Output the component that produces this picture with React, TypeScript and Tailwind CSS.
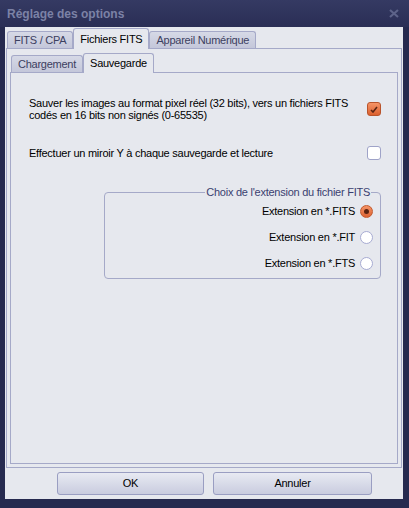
import React from 'react';

const font = { fontFamily: '"Liberation Sans", Arial, sans-serif' };

function CheckBox({ checked }: { checked?: boolean }) {
  if (checked) {
    return (
      <div className="w-[14px] h-[14px] shrink-0 rounded-[3px] border border-[#b9532b] bg-gradient-to-b from-[#f59466] to-[#db5f2d] flex items-center justify-center">
        <svg width="8" height="7" viewBox="0 0 8 7">
          <path d="M1 4 L3 6 L7 1" stroke="#5b2412" strokeWidth="1.6" fill="none" />
        </svg>
      </div>
    );
  }
  return <div className="w-[14px] h-[14px] shrink-0 rounded-[3px] border border-[#9fa3c8] bg-white" />;
}

function Radio({ checked }: { checked?: boolean }) {
  if (checked) {
    return (
      <div className="w-[13px] h-[13px] shrink-0 rounded-full border border-[#c25a2e] bg-gradient-to-b from-[#f59466] to-[#dc6232] flex items-center justify-center">
        <div className="w-[5px] h-[5px] rounded-full bg-[#5a2210]" />
      </div>
    );
  }
  return <div className="w-[13px] h-[13px] shrink-0 rounded-full border border-[#a7abd2] bg-white" />;
}

function OuterTab({ label, active }: { label: string; active?: boolean }) {
  return active ? (
    <div className="h-[21px] -mb-px z-10 px-[6px] flex items-center border border-b-0 border-[#a5a9c8] rounded-t-[3px] bg-[#e6e8ee] text-black">
      {label}
    </div>
  ) : (
    <div className="h-[17px] px-[6px] flex items-center border border-b-0 border-[#a5a9c8] rounded-t-[3px] bg-gradient-to-b from-[#d6d9e6] to-[#c4c7da] text-[#3c4060]">
      {label}
    </div>
  );
}

function RadioRow({ label, checked }: { label: string; checked?: boolean }) {
  return (
    <div className="flex items-center justify-end gap-[5px] h-[13px]">
      <span>{label}</span>
      <Radio checked={checked} />
    </div>
  );
}

export default function App() {
  return (
    <div className="w-[409px] h-[508px] bg-[#262a4f] flex flex-col text-[11px] tracking-[-0.25px] text-black" style={font}>
      {/* Title bar */}
      <div className="h-[27px] shrink-0 flex items-center justify-between pl-[7px] pr-[10px] bg-gradient-to-b from-[#353a63] to-[#2a2e55]">
        <span className="text-[12px] font-bold tracking-normal text-[#7c82a6]">Réglage des options</span>
        <svg width="10" height="9" viewBox="0 0 10 9">
          <path d="M1 1 L9 8 M9 1 L1 8" stroke="#5d6389" strokeWidth="2.2" />
        </svg>
      </div>

      {/* Client */}
      <div className="flex-1 ml-[5px] mr-[6px] mb-[9px] bg-[#e6e8ee] flex flex-col">
        {/* Outer tabs */}
        <div className="h-[21px] flex items-end pl-[2px]">
          <OuterTab label="FITS / CPA" />
          <OuterTab label="Fichiers FITS" active />
          <OuterTab label="Appareil Numérique" />
        </div>

        {/* Outer panel */}
        <div className="ml-[1px] mr-[1px] h-[420px] border border-[#a5a9c8] flex flex-col px-[3px]">
          {/* Inner tabs */}
          <div className="h-[23px] flex items-end pl-[1px]">
            <div className="h-[17px] px-[6px] flex items-center border border-b-0 border-[#a5a9c8] rounded-t-[3px] bg-gradient-to-b from-[#d6d9e6] to-[#c4c7da] text-[#3c4060]">
              Chargement
            </div>
            <div className="h-[20px] -mb-px z-10 px-[6px] flex items-center border border-b-0 border-[#a5a9c8] rounded-t-[3px] bg-[#e6e8ee]">
              Sauvegarde
            </div>
          </div>

          {/* Inner panel */}
          <div className="h-[392px] border border-[#a5a9c8] pl-[18px] pr-[16px] pt-[24px]">
            <div className="flex items-center justify-between">
              <p className="leading-[12px]">
                Sauver les images au format pixel réel (32 bits), vers un fichiers FITS
                <br />
                codés en 16 bits non signés (0-65535)
              </p>
              <CheckBox checked />
            </div>

            <div className="flex items-center justify-between mt-[25px]">
              <p className="leading-[12px]">Effectuer un miroir Y à chaque sauvegarde et lecture</p>
              <CheckBox />
            </div>

            <div className="ml-[75px] mt-[32px] h-[87px] relative border border-[#a5a9c8] rounded-[4px] pr-[7px] pt-[12px] flex flex-col gap-[13px]">
              <span className="absolute -top-[7px] right-[9px] px-[1px] bg-[#e6e8ee] text-[#3a3f70] leading-[12px]">
                Choix de l'extension du fichier FITS
              </span>
              <RadioRow label="Extension en *.FITS" checked />
              <RadioRow label="Extension en *.FIT" />
              <RadioRow label="Extension en *.FTS" />
            </div>
          </div>
        </div>

        {/* Buttons */}
        <div className="flex gap-[9px] pl-[52px] mt-[4px]">
          <button className="w-[147px] h-[23px] rounded-[3px] border border-[#9a9ec2] bg-gradient-to-b from-[#e8eaf2] to-[#c9ccdf] text-black">
            OK
          </button>
          <button className="w-[159px] h-[23px] rounded-[3px] border border-[#9a9ec2] bg-gradient-to-b from-[#e8eaf2] to-[#c9ccdf] text-black">
            Annuler
          </button>
        </div>
      </div>
    </div>
  );
}
